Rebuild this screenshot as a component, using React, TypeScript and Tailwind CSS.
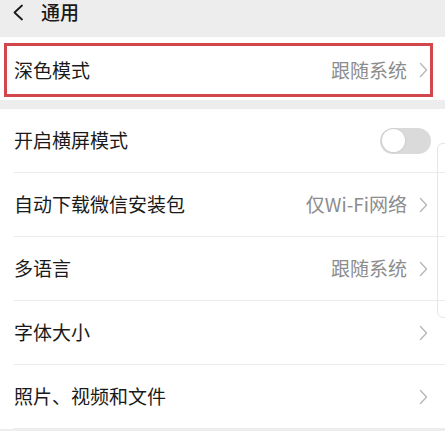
import React from 'react';

const Chevron = () => (
  <svg width="9" height="16" viewBox="0 0 9 16" className="shrink-0">
    <path d="M1.5 1.5 L7.5 8 L1.5 14.5" fill="none" stroke="#b8b8b8" strokeWidth="1.4" strokeLinecap="round" strokeLinejoin="round" />
  </svg>
);

interface RowProps {
  label: string;
  value?: string;
  toggle?: boolean;
  last?: boolean;
}

const Row: React.FC<RowProps> = ({ label, value, toggle, last }) => (
  <div className="pl-[14px]">
    <div className={`flex items-center h-[64px] pr-[17px] ${last ? '' : 'border-b border-[#ececec]'}`}>
      <span className="flex-1 text-[19px] text-[#1a1a1a]">{label}</span>
      {toggle ? (
        <div className="w-[51px] h-[26px] rounded-full bg-[#dadada] p-[1.5px] mr-[-3px]">
          <div className="w-[23px] h-[23px] rounded-full bg-white shadow-[0_0_2px_rgba(0,0,0,0.15)]" />
        </div>
      ) : (
        <div className="flex items-center gap-[12px]">
          {value && <span className="text-[19px] text-[#8c8c8c]">{value}</span>}
          <Chevron />
        </div>
      )}
    </div>
  </div>
);

export default function App() {
  return (
    <div
      className="w-[445px] h-[431px] overflow-hidden bg-[#ededed] relative"
      style={{ fontFamily: '"Noto Sans CJK SC", "Noto Sans", sans-serif' }}
    >
      {/* header */}
      <div className="h-[37px] flex items-start pl-[12px] pt-[2px]">
        <svg width="12" height="17" viewBox="0 0 12 17" className="mt-[2px]">
          <path d="M10 1.5 L2.5 8.5 L10 15.5" fill="none" stroke="#1a1a1a" strokeWidth="1.8" strokeLinecap="round" strokeLinejoin="round" />
        </svg>
        <span className="ml-[17px] text-[19px] leading-[20px] text-[#1a1a1a] font-medium">通用</span>
      </div>

      {/* dark mode section */}
      <div className="bg-white h-[63px] pt-[6px] px-[4px]">
        <div className="h-[54px] border-[3px] border-[#d1474c] flex items-center pl-[7px] pr-[2px] w-[429px]">
          <span className="flex-1 text-[19px] text-[#1a1a1a]">深色模式</span>
          <span className="text-[19px] text-[#8c8c8c] mr-[12px]">跟随系统</span>
          <Chevron />
        </div>
      </div>

      <div className="h-[9px]" />

      {/* list */}
      <div className="bg-white">
        <Row label="开启横屏模式" toggle />
        <Row label="自动下载微信安装包" value="仅Wi-Fi网络" />
        <Row label="多语言" value="跟随系统" />
        <Row label="字体大小" />
        <Row label="照片、视频和文件" />
      </div>

      {/* faint edge of a card peeking in from the right */}
      <div className="absolute left-[437px] top-[143px] w-[20px] h-[175px] rounded-[6px] border border-[#e6e6e6]" />
    </div>
  );
}
